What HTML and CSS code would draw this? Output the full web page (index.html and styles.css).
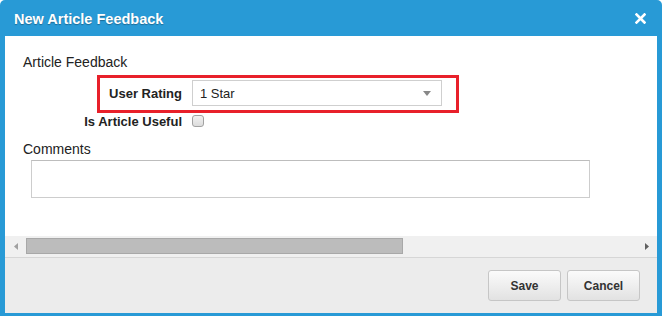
FILE: index.html
```html
<!DOCTYPE html>
<html lang="en">
<head>
    <meta charset="UTF-8">
    <title>New Article Feedback</title>
    <link rel="stylesheet" href="styles.css">
</head>
<body>
    <div class="dialog">
        <div class="dialog-title">
            <span>New Article Feedback</span>
            <svg class="close-icon" width="11" height="11" viewBox="0 0 11 11">
                <path d="M1.5 1.5 L9.5 9.5 M9.5 1.5 L1.5 9.5" stroke="#fff" stroke-width="2.6" stroke-linecap="square"/>
            </svg>
        </div>
        <div class="dialog-body">
            <div class="content">
                <div class="section-title">Article Feedback</div>
                <div class="highlight-box">
                    <div class="form-row">
                        <label class="field-label">User Rating</label>
                        <div class="select-box">
                            <span>1 Star</span>
                            <svg class="select-arrow" width="8" height="5" viewBox="0 0 8 5">
                                <path d="M0 0 H8 L4 5 Z" fill="#888"/>
                            </svg>
                        </div>
                    </div>
                </div>
                <div class="form-row plain-row">
                    <label class="field-label">Is Article Useful</label>
                    <span class="checkbox"></span>
                </div>
                <div class="section-title comments-title">Comments</div>
                <div class="comments-box"></div>
            </div>
            <div class="hscroll">
                <div class="scroll-btn">
                    <svg width="4" height="7" viewBox="0 0 4 7"><path d="M4 0 V7 L0 3.5 Z" fill="#a0a0a0"/></svg>
                </div>
                <div class="scroll-track">
                    <div class="scroll-thumb"></div>
                </div>
                <div class="scroll-btn">
                    <svg width="4" height="7" viewBox="0 0 4 7"><path d="M0 0 V7 L4 3.5 Z" fill="#606060"/></svg>
                </div>
            </div>
            <div class="dialog-footer">
                <button class="btn">Save</button>
                <button class="btn">Cancel</button>
            </div>
        </div>
    </div>
</body>
</html>
```

FILE: styles.css
```css
body {
    margin: 0;
    font-family: "Liberation Sans", Arial, sans-serif;
    color: #222;
}
.dialog {
    width: 662px;
    height: 316px;
    background: #289ad6;
    border-radius: 5px 5px 0 0;
    display: flex;
    flex-direction: column;
    box-sizing: border-box;
    padding: 0 5px 3px 5px;
}
.dialog-title {
    height: 36px;
    box-sizing: border-box;
    padding: 3px 11px 0 9px;
    line-height: 33px;
    display: flex;
    align-items: center;
    justify-content: space-between;
    color: #fff;
    font-weight: bold;
    font-size: 14.5px;
    text-shadow: 0 1px 1px rgba(0,0,0,0.3);
}
.close-icon {
    margin-top: -3px;
}
.dialog-body {
    flex: 1;
    display: flex;
    flex-direction: column;
    background: #fff;
}
.content {
    height: 200px;
    box-sizing: border-box;
    padding: 18px 0 0 18px;
}
.section-title {
    font-size: 14px;
    line-height: 16px;
}
.highlight-box {
    width: 362px;
    box-sizing: border-box;
    margin: 5px 0 0 74px;
    border: 3px solid #e8202a;
    padding: 2px 14px 4px 0;
}
.form-row {
    display: flex;
    align-items: center;
    gap: 10px;
}
.plain-row {
    margin-left: 77px;
    height: 16px;
}
.field-label {
    width: 82px;
    display: flex;
    justify-content: flex-end;
    font-weight: bold;
    font-size: 13px;
    white-space: nowrap;
}
.select-box {
    width: 250px;
    height: 26px;
    box-sizing: border-box;
    border: 1px solid #cfcfcf;
    display: flex;
    align-items: center;
    justify-content: space-between;
    padding: 0 10px 0 7px;
    font-size: 13px;
}
.select-arrow {
    margin-top: 1px;
}
.checkbox {
    width: 12px;
    height: 12px;
    box-sizing: border-box;
    border: 1px solid #a2a2a2;
    border-radius: 3px;
    background: linear-gradient(#f2f2f2, #dcdcdc);
}
.comments-title {
    margin-top: 12px;
}
.comments-box {
    width: 559px;
    height: 38px;
    box-sizing: border-box;
    margin: 3px 0 0 8px;
    border: 1px solid #cdcdcd;
    border-top-color: #bdbdbd;
}
.hscroll {
    height: 21px;
    display: flex;
    background: #f0f0f0;
}
.scroll-btn {
    width: 21px;
    display: flex;
    align-items: center;
    justify-content: center;
}
.scroll-track {
    flex: 1;
    padding-top: 2px;
}
.scroll-thumb {
    width: 377px;
    height: 16px;
    box-sizing: border-box;
    background: #bcbcbc;
    border: 1px solid #a8a8a8;
}
.dialog-footer {
    flex: 1;
    background: #ececec;
    border-top: 1px solid #d6d6d6;
    display: flex;
    justify-content: flex-end;
    align-items: flex-start;
    gap: 6px;
    padding: 12px 17px 0 0;
}
.btn {
    width: 73px;
    height: 31px;
    border: 1px solid #c6c6c6;
    border-radius: 3px;
    background: linear-gradient(#fbfbfb, #e2e2e2);
    font-family: "Liberation Sans", Arial, sans-serif;
    font-weight: bold;
    font-size: 12px;
    color: #333;
    padding: 0;
}
```
